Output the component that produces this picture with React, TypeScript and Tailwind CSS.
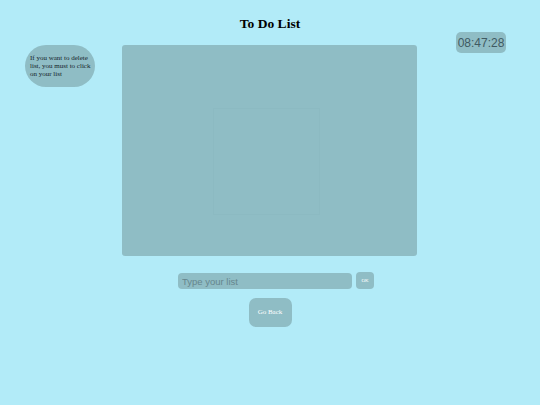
import { useState } from "react";

export default function App() {
  const [items] = useState<string[]>([]);
  const [text, setText] = useState("");

  return (
    <div className="min-h-[405px] w-full bg-[#b2ebf8] font-['Liberation_Serif',serif]">
      {/* header */}
      <div className="h-[45px] pt-[15px] text-center">
        <h1 className="text-[13.5px] font-bold leading-[17px] text-black">
          To Do List
        </h1>
      </div>

      {/* main row */}
      <div className="grid grid-cols-[122px_295px_1fr]">
        <div className="pl-[25px]">
          <div className="w-[70px] h-[42px] rounded-full bg-[#8fbdc5] pl-[5px] pr-[3px] pt-[9px] text-[7px] leading-[8px] text-[#14242a]">
            If you want to delete list, you must to click on your list
          </div>
        </div>

        <div className="h-[211px] rounded-[3px] bg-[#8fbdc5] flex justify-center pt-[63px] pr-[6px]">
          <ul className="w-[107px] h-[107px] border border-[#8cbac2]">
            {items.map((item) => (
              <li key={item}>{item}</li>
            ))}
          </ul>
        </div>

        <div className="pl-[39px]">
          <div className="-mt-[13px] flex h-[21px] w-[50px] items-center justify-center rounded-[5px] bg-[#8fbdc5] font-['Liberation_Sans',sans-serif] text-[12px] text-[#3f5a62]">
            08:47:28
          </div>
        </div>
      </div>

      {/* input row */}
      <div className="mt-[16px] flex justify-center pl-[12px] gap-[4px]">
        <input
          value={text}
          onChange={(e) => setText(e.target.value)}
          placeholder="Type your list"
          className="w-[174px] h-[16px] mt-[1px] rounded-[4px] bg-[#8fbdc5] px-[4px] font-['Liberation_Sans',sans-serif] text-[9.5px] text-[#2f4a51] placeholder:text-[#66868d] outline-none"
        />
        <button className="w-[18px] h-[17px] rounded-[4px] bg-[#8fbdc5] text-[5px] text-white">
          OK
        </button>
      </div>

      <div className="mt-[9px] flex justify-center">
        <button className="w-[43px] h-[29px] rounded-[7px] bg-[#8fbdc5] text-[7px] text-white">
          Go Back
        </button>
      </div>
    </div>
  );
}
